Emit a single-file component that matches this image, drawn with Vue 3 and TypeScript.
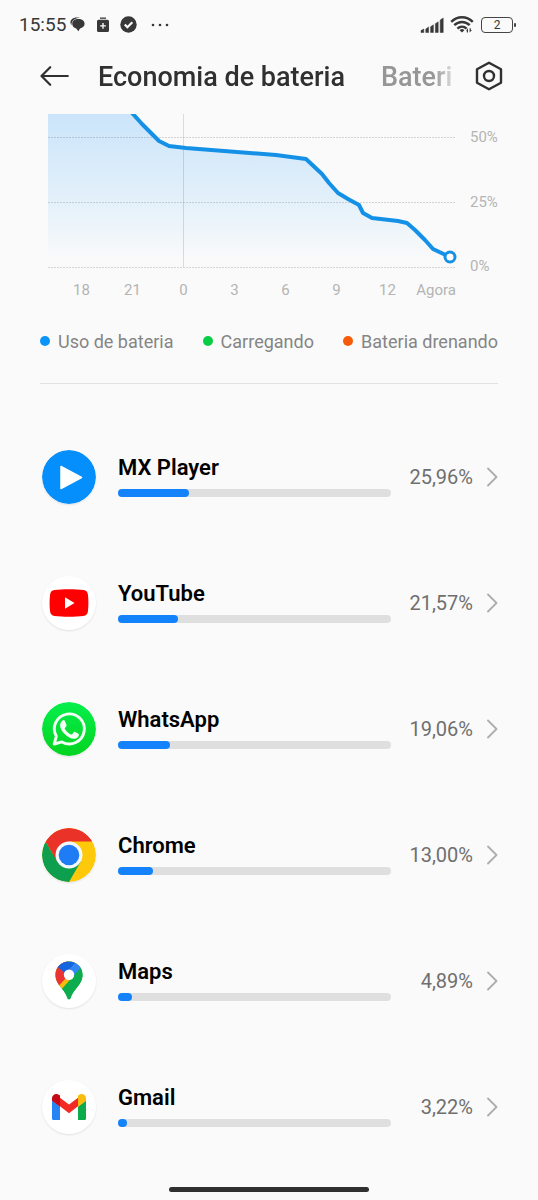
<script setup lang="ts">
interface AppUsage {
  id: string
  name: string
  percent: string
  fill: number
}

const apps: AppUsage[] = [
  { id: 'mx', name: 'MX Player', percent: '25,96%', fill: 26 },
  { id: 'youtube', name: 'YouTube', percent: '21,57%', fill: 22 },
  { id: 'whatsapp', name: 'WhatsApp', percent: '19,06%', fill: 19 },
  { id: 'chrome', name: 'Chrome', percent: '13,00%', fill: 13 },
  { id: 'maps', name: 'Maps', percent: '4,89%', fill: 5 },
  { id: 'gmail', name: 'Gmail', percent: '3,22%', fill: 3 },
]

const hours: string[] = ['18', '21', '0', '3', '6', '9', '12', 'Agora']
const levels: string[] = ['50%', '25%', '0%']

const legend = [
  { label: 'Uso de bateria', tone: 'blue' },
  { label: 'Carregando', tone: 'green' },
  { label: 'Bateria drenando', tone: 'orange' },
]

const plotWidth = 408
const plotHeight = 154
const points: [number, number][] = [
  [78, -8], [85, 0], [94, 10], [111, 27], [121, 32], [138, 34], [228, 41], [258, 45],
  [274, 60], [281, 69], [290, 79], [300, 85], [311, 91], [315, 99], [324, 104],
  [350, 107], [359, 109], [367, 116], [377, 126], [385, 135], [402, 143],
]
const line = points.map((p) => p.join(',')).join(' ')
const area = `0,-8 ${line} 402,${plotHeight} 0,${plotHeight}`
const last = points[points.length - 1]
const marker = {
  left: `${(last[0] / plotWidth) * 100}%`,
  top: `${(last[1] / plotHeight) * 100}%`,
}
</script>

<template>
  <div class="screen">
    <div class="status">
      <time>15:55</time>
      <svg class="chat" width="15" height="15" viewBox="0 0 15 15" aria-hidden="true">
        <path d="M8.4 2C12 2 14.600 4 14.600 6.800c0 2.400-1.900 4.200-4.600 4.700L8.400 14.300 6.200 11.500C3.700 10.900 2.200 9 2.200 6.800 2.200 4 4.800 2 8.400 2Z" />
        <path d="M10 .8C4-.6.400 2 .400 5.200c0 1.300.400 2.300 1.100 3.200C1.200 4.500 4 1.200 10 .8Z" />
      </svg>
      <svg class="saver" width="12" height="16" viewBox="0 0 12 16" aria-hidden="true">
        <path d="M3 .5h6v1.300H3Z" />
        <path fill-rule="evenodd" d="M1.500 2.800h9A1.500 1.500 0 0 1 12 4.300v9.200a1.500 1.500 0 0 1-1.500 1.500h-9A1.500 1.500 0 0 1 0 13.500V4.300a1.500 1.500 0 0 1 1.500-1.500ZM5.300 6v2.200H3.100v1.400h2.200v2.200h1.400V9.600h2.200V8.200H6.700V6Z" />
      </svg>
      <svg class="tick" width="17" height="17" viewBox="0 0 17 17" aria-hidden="true">
        <circle cx="8.500" cy="8.500" r="8.200" />
        <path d="m4.800 8.500 2.600 2.700 4.900-5" fill="none" stroke="#fafafa" stroke-width="2.200" />
      </svg>
      <svg class="dots" width="20" height="4" viewBox="0 0 20 4" aria-hidden="true">
        <circle cx="3" cy="2" r="1.300" /><circle cx="10" cy="2" r="1.300" /><circle cx="17" cy="2" r="1.300" />
      </svg>
      <svg class="signal" width="25" height="16" viewBox="0 0 25 16" aria-hidden="true">
        <path d="M1 13.600 3.800 12v3.500H1ZM5.800 12 8.600 9.900v5.600H5.800ZM10.600 9.700l2.800-1.900v7.700h-2.800ZM15.400 6.700l2.800-1.900v10.700h-2.800ZM20.200 3 23.200 1v14.500h-3Z" stroke="#383838" stroke-width=".5" stroke-linejoin="round" />
      </svg>
      <svg class="wifi" width="24" height="17" viewBox="0 0 24 17" aria-hidden="true">
        <g fill="none" stroke="#383838" stroke-width="2.400">
          <path d="M1.200 5.800C7.500-.3 16.500-.3 22.800 5.800" />
          <path d="M4.300 9.200C8.800 4.900 15.200 4.900 19.700 9.200" />
          <path d="M7.400 12.600c2.700-2.600 6.500-2.600 9.200 0" />
        </g>
        <path d="M9.600 14.200a3.400 3.400 0 0 1 4.800 0L12 16.600Z" />
        <path d="m16 14.500 2-2.200v4.200h-1.200v-2ZM19.600 12.300v4.200l2.400-2.400h-1.200v-1.800Z" />
      </svg>
      <span class="cell">2</span>
    </div>

    <header class="bar">
      <button type="button" class="back" aria-label="Voltar">
        <svg width="30" height="20" viewBox="0 0 30 20" aria-hidden="true">
          <path d="M27.800 10H2M10.200 1.200 1.500 10l8.700 8.800" fill="none" stroke="#303030" stroke-width="2.200" stroke-linecap="round" stroke-linejoin="round" />
        </svg>
      </button>
      <nav class="tabs">
        <button type="button" class="tab current">Economia de bateria</button>
        <button type="button" class="tab">Bateria</button>
      </nav>
      <button type="button" class="gear" aria-label="Configurações">
        <svg width="28" height="30" viewBox="0 0 28 30" aria-hidden="true">
          <g fill="none" stroke="#303030" stroke-width="2.400" stroke-linejoin="round">
            <path d="M14 1.800 26 8.300v13.400L14 28.200 2 21.700V8.300Z" />
            <circle cx="14" cy="15" r="5" />
          </g>
        </svg>
      </button>
    </header>

    <main>
      <section class="chart">
        <div class="plot">
          <svg :viewBox="`0 0 ${plotWidth} ${plotHeight}`" preserveAspectRatio="none" aria-hidden="true">
            <defs>
              <linearGradient id="fade" x1="0" y1="0" x2="0" y2="154" gradientUnits="userSpaceOnUse">
                <stop offset="0" stop-color="#cbe5fa" />
                <stop offset="0.500" stop-color="#e0effa" />
                <stop offset="0.950" stop-color="#fafafa" />
              </linearGradient>
            </defs>
            <polygon :points="area" fill="url(#fade)" />
            <path class="grid" d="M0 23.500H408M0 88.500H408M0 153.500H408" />
            <path class="midnight" d="M135.500 0V153" />
            <polyline class="line" :points="line" />
          </svg>
          <span class="marker" :style="marker"></span>
        </div>
        <div class="levels">
          <span v-for="level in levels" :key="level">{{ level }}</span>
        </div>
        <div class="hours">
          <span v-for="hour in hours" :key="hour">{{ hour }}</span>
        </div>
      </section>

      <ul class="legend">
        <li v-for="item in legend" :key="item.label">
          <i :class="item.tone"></i>{{ item.label }}
        </li>
      </ul>

      <ul class="apps">
        <li v-for="app in apps" :key="app.id">
          <button type="button" class="app">
            <svg class="icon" viewBox="0 0 54 54" aria-hidden="true">
              <template v-if="app.id === 'mx'">
                <circle cx="27" cy="27" r="27" fill="#058ffc" />
                <path d="M19 16.500v22L39.500 27.500Z" fill="#fff" stroke="#fff" stroke-width="1.500" stroke-linejoin="round" />
              </template>
              <template v-else-if="app.id === 'youtube'">
                <circle cx="27" cy="27" r="27" fill="#fff" />
                <path d="M12.500 14.100c8-1 21-1 29 0 2.600.300 4.100 1.800 4.400 4.400.700 5.600.700 11.400 0 17-.300 2.600-1.800 4.100-4.400 4.400-8 1-21 1-29 0-2.600-.300-4.100-1.800-4.400-4.400-.700-5.600-.700-11.400 0-17 .300-2.600 1.800-4.100 4.400-4.400Z" fill="#fe0000" />
                <path d="M23 21.200v11.600l9.500-5.800Z" fill="#fff" />
              </template>
              <template v-else-if="app.id === 'whatsapp'">
                <defs>
                  <linearGradient id="leaf" x1="0" y1="0" x2="0" y2="1">
                    <stop offset="0" stop-color="#06ef4c" />
                    <stop offset="1" stop-color="#03d420" />
                  </linearGradient>
                </defs>
                <circle cx="27" cy="27" r="27" fill="url(#leaf)" />
                <path d="m12.200 42 2.100-7.700a15 15 0 1 1 5.600 5.600Z" fill="none" stroke="#f4fff6" stroke-width="2.900" stroke-linejoin="round" />
                <path d="M20.300 18.700c.700-.800 1.800-.800 2.300-.200l.500.900 1.400 3.500c.200.500.100.900-.200 1.300l-1.400 1.700c-.300.400-.200.700 0 1 1.500 2.500 3.500 4.300 6.200 5.500.500.200.8.200 1.100-.200l1.600-2c.300-.400.700-.5 1.200-.300l3.100 1.500c.6.300.8.500.800.900.1 3-2.500 4.600-4.700 4.500-3.500 0-7.400-2.300-10.100-5.300-2.300-2.600-4.100-5.400-4-8.200.1-2 1-3.600 2.200-4.600Z" fill="#f4fff6" />
              </template>
              <template v-else-if="app.id === 'chrome'">
                <circle cx="27" cy="27" r="27" fill="#fdc90a" />
                <path d="M3.620 13.500A27 27 0 0 0 27 54L38.700 33.800 27 27H11.400Z" fill="#0d9f4e" />
                <path d="M3.620 13.500A27 27 0 0 1 50.380 13.500H27L15.300 33.800Z" fill="#ea3229" />
                <circle cx="27" cy="27" r="13.500" fill="#f5f8fb" />
                <circle cx="27" cy="27" r="10.300" fill="#1f7cf5" />
              </template>
              <template v-else-if="app.id === 'maps'">
                <defs>
                  <clipPath id="pin">
                    <path d="M27 7.500c7.600 0 13.500 5.800 13.500 13.300 0 5.700-2.700 9.300-6.300 13.600-3 3.600-4.700 6.300-5.600 9.600-.500 1.700-2.700 1.700-3.200 0-.9-3.300-2.600-6-5.600-9.600-3.600-4.300-6.300-7.900-6.300-13.600C13.500 13.300 19.400 7.500 27 7.500Z" />
                  </clipPath>
                </defs>
                <circle cx="27" cy="27" r="27" fill="#fff" />
                <g clip-path="url(#pin)">
                  <path d="M12 6h30v42H12Z" fill="#0dac4d" />
                  <path d="M12 6H34L42 13 18 38 12 34Z" fill="#fab90b" />
                  <path d="M12 6h14l1 15L15 33.500 10 30Z" fill="#ea3434" />
                  <path d="M14 11.500 24 20 36 6H14Z" fill="#1465e0" />
                  <path d="M23 21 35.500 6 43 12 32 24Z" fill="#3287f7" />
                  <path d="M38.900 13.500 44 12v34H26l-8-9Z" fill="#0dac4d" />
                </g>
                <circle cx="27" cy="20.800" r="5.200" fill="#fff" />
              </template>
              <template v-else>
                <circle cx="27" cy="27" r="27" fill="#fff" />
                <path d="M10 20.500 18 26.500V40H11.500A1.500 1.500 0 0 1 10 38.500Z" fill="#2684f5" />
                <path d="M44 20.500 36 26.500V40h6.500a1.500 1.500 0 0 0 1.500-1.500Z" fill="#0dab4b" />
                <path d="M18 17.800 27 24.500l9-6.700v8.400L27 33.300l-9-7.100Z" fill="#f32b25" />
                <path d="M10 18.500c0-4.200 4.400-5.600 7.200-3.500l.8.600v11.100l-8-6Z" fill="#c50a16" />
                <path d="M44 18.500c0-4.200-4.400-5.600-7.200-3.500l-.8.600v11.100l8-6Z" fill="#fcbc0c" />
              </template>
            </svg>
            <span class="body">
              <span class="name">{{ app.name }}</span>
              <span class="track"><span class="fill" :style="{ width: app.fill + '%' }"></span></span>
            </span>
            <span class="percent">{{ app.percent }}</span>
            <svg class="chevron" width="11" height="20" viewBox="0 0 11 20" aria-hidden="true">
              <path d="m1 1.500 8.500 8.500L1 18.500" fill="none" stroke="#adadad" stroke-width="1.800" stroke-linecap="round" stroke-linejoin="round" />
            </svg>
          </button>
        </li>
      </ul>
    </main>

    <div class="home"><span></span></div>
  </div>
</template>

<style>
body {
  margin: 0;
  background: #fafafa;
}
</style>

<style scoped>
.screen {
  font-family: Roboto, "Noto Sans", sans-serif;
  color: #303030;
  background: #fafafa;
}

button {
  margin: 0;
  padding: 0;
  border: 0;
  background: none;
  font: inherit;
  color: inherit;
  cursor: pointer;
}

ul {
  list-style: none;
  margin: 0;
  padding: 0;
}

svg {
  display: block;
  flex: none;
}

.status {
  display: flex;
  align-items: center;
  height: 49px;
  padding: 0 22px 0 19px;
  color: #383838;
  fill: #383838;
}

.status time {
  font-size: 19px;
}

.chat {
  margin-left: 4px;
}

.saver {
  margin-left: 12px;
}

.tick {
  margin-left: 11px;
}

.dots {
  margin-left: 13px;
}

.signal {
  margin-left: auto;
}

.wifi {
  margin-left: 5px;
}

.cell {
  position: relative;
  box-sizing: border-box;
  width: 32px;
  height: 16px;
  margin: 0 3px 0 7px;
  border: 1px solid #454545;
  border-radius: 4px;
  font-size: 12px;
  line-height: 14px;
  text-align: center;
}

.cell::after {
  content: "";
  position: absolute;
  top: 5px;
  right: -4px;
  width: 2px;
  height: 4px;
  border-radius: 1px;
  background: #454545;
}

.bar {
  display: flex;
  align-items: center;
  height: 53px;
  padding: 0 35px 12px 40px;
}

.tabs {
  display: flex;
  flex: 1;
  gap: 36px;
  min-width: 0;
  margin: 0 22px 0 28px;
  padding-top: 2px;
  overflow: hidden;
  mask-image: linear-gradient(to right, #000 calc(100% - 20px), rgba(0, 0, 0, 0.3));
}

.tab {
  flex: none;
  font-size: 27px;
  font-weight: 500;
  line-height: 36px;
  color: #969696;
}

.tab.current {
  color: #303030;
}

.chart {
  display: grid;
  grid-template-columns: 1fr 42px;
  padding: 0 40px 0 48px;
  font-size: 15px;
  line-height: 20px;
  color: #b4b4b4;
}

.plot {
  position: relative;
  height: 154px;
}

.plot svg {
  width: 100%;
  height: 100%;
}

.grid,
.midnight,
.line {
  fill: none;
  vector-effect: non-scaling-stroke;
}

.grid {
  stroke: rgba(0, 0, 0, 0.15);
  stroke-width: 1;
  stroke-dasharray: 2 1;
}

.midnight {
  stroke: rgba(60, 80, 100, 0.18);
  stroke-width: 1;
}

.line {
  stroke: #1491e6;
  stroke-width: 4;
  stroke-linejoin: round;
}

.marker {
  position: absolute;
  box-sizing: border-box;
  width: 13px;
  height: 13px;
  border: 3px solid #1491e6;
  border-radius: 50%;
  background: #fff;
  transform: translate(-50%, -50%);
}

.levels {
  display: flex;
  flex-direction: column;
  justify-content: space-between;
  margin-bottom: -8px;
  padding: 13px 0 0 14px;
}

.hours {
  display: grid;
  grid-template-columns: repeat(7, 51fr) 43fr;
  padding: 12px 0 0 8px;
  text-align: center;
}

.hours span:last-child {
  justify-self: end;
}

.legend {
  display: flex;
  justify-content: space-between;
  margin: 0 40px;
  padding: 30px 0 29px;
  border-bottom: 1px solid #e2e2e2;
  font-size: 18px;
  line-height: 24px;
  color: #858585;
}

.legend li {
  display: flex;
  align-items: center;
  gap: 8px;
}

.legend i {
  width: 10px;
  height: 10px;
  margin-bottom: 2px;
  border-radius: 50%;
}

.blue {
  background: #0c94f8;
}

.green {
  background: #08cd45;
}

.orange {
  background: #f75a0a;
}

.apps {
  padding-top: 30px;
}

.app {
  display: flex;
  align-items: center;
  width: 100%;
  height: 126px;
  padding: 0 40px 0 42px;
  text-align: left;
}

.icon {
  width: 54px;
  height: 54px;
  border-radius: 50%;
  box-shadow: 0 1px 2px rgba(0, 0, 0, 0.1);
}

.body {
  flex: 1;
  margin-left: 22px;
  padding-bottom: 4px;
}

.name {
  display: block;
  font-size: 22px;
  font-weight: 600;
  line-height: 28px;
  color: #000;
}

.track {
  display: block;
  height: 8px;
  margin-top: 7px;
  border-radius: 4px;
  background: #dfdfdf;
}

.fill {
  display: block;
  min-width: 9px;
  height: 8px;
  border-radius: 4px;
  background: #1482fa;
}

.percent {
  width: 82px;
  font-size: 20px;
  text-align: right;
  color: #6f6f6f;
}

.chevron {
  margin-left: 14px;
}

.home {
  display: flex;
  justify-content: center;
  padding: 17px 0 8px;
}

.home span {
  width: 37%;
  height: 5px;
  border-radius: 3px;
  background: #303030;
}
</style>
